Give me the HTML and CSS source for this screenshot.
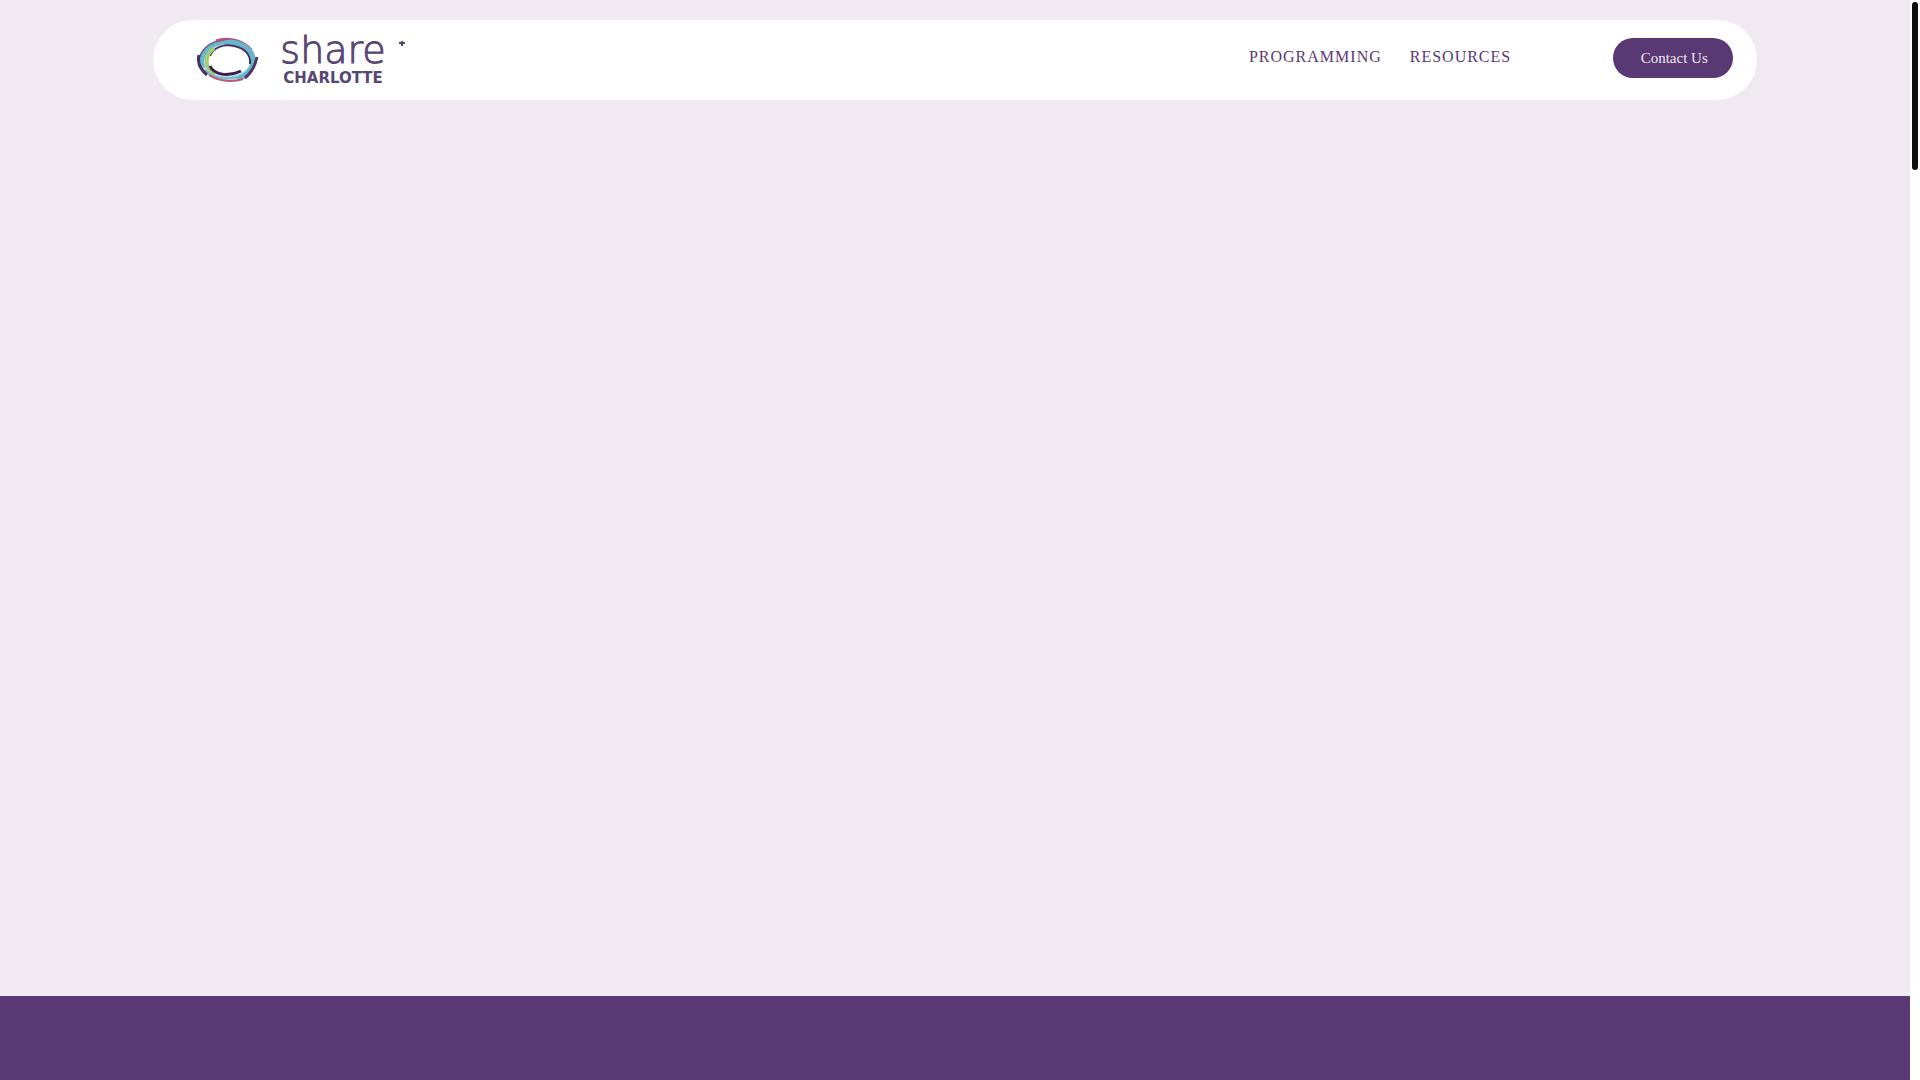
FILE: index.html
```html
<!DOCTYPE html>
<html lang="en">
<head>
<meta charset="utf-8">
<meta name="viewport" content="width=device-width, initial-scale=1">
<title>SHARE Charlotte</title>
<link rel="stylesheet" href="styles.css">
</head>
<body>
<div class="page">
  <div class="hero">
    <header class="header">
      <a class="logo" href="#" aria-label="SHARE Charlotte home">
        <svg class="ring" viewBox="0 0 62 46" fill="none" aria-hidden="true">
          <ellipse cx="31" cy="23" rx="25" ry="18" stroke="#b9dce3" stroke-width="5"/>
          <path d="M3 31C-1 15 12 4 29 3" stroke="#6d5486" stroke-width="2"/>
          <path d="M6 31C1 17 13 7 30 4" stroke="#62bacb" stroke-width="4"/>
          <path d="M19 4C33-1 48 5 54 13" stroke="#b34e74" stroke-width="3"/>
          <path d="M27 6C43 3 57 12 56 25C55 34 48 40 40 42" stroke="#64b7cb" stroke-width="5"/>
          <path d="M13 19C16 10 27 7 37 9C48 11 54 18 53 27" stroke="#49305f" stroke-width="2"/>
          <path d="M17 11C7 18 7 31 18 37" stroke="#a5ca70" stroke-width="4"/>
          <path d="M13 29C17 38 31 40 44 34" stroke="#38214f" stroke-width="3"/>
          <path d="M8 33C15 41 27 43 41 40" stroke="#74b8ca" stroke-width="2"/>
          <path d="M12 38C22 45 37 45 46 42" stroke="#bd5878" stroke-width="2"/>
          <path d="M60 20C58 30 54 36 48 41" stroke="#4f3867" stroke-width="3"/>
          <path d="M2 18C0 26 4 33 10 38" stroke="#49305f" stroke-width="3"/>
        </svg>
        <svg class="wordmark" viewBox="0 0 148 50" aria-hidden="true">
          <text class="wordmark-share" x="70" y="28">share</text>
          <text class="wordmark-city" x="70" y="48">CHARLOTTE</text>
          <path d="M139 6v5M136 8h6" stroke="#584673" stroke-width="2"/>
        </svg>
      </a>
      <nav class="nav" aria-label="Main">
        <a class="nav-link" href="#">PROGRAMMING</a>
        <a class="nav-link" href="#">RESOURCES</a>
      </nav>
      <button class="contact" type="button">Contact Us</button>
    </header>
  </div>
  <section class="band"></section>
</div>
<div class="scroll-track" aria-hidden="true"><div class="scroll-thumb"></div></div>
</body>
</html>
```
FILE: styles.css
```css
* {
  box-sizing: border-box;
}

body {
  display: flex;
  min-height: 100vh;
  margin: 0;
  background: #fff;
  font-family: "Liberation Serif", "Times New Roman", serif;
}

.page {
  display: flex;
  flex: 1;
  flex-direction: column;
}

.hero {
  flex: 1;
  padding: 20px 8%;
  background: #f0e9f1;
}

.header {
  display: flex;
  align-items: center;
  height: 80px;
  padding: 0 24px 0 44px;
  border-radius: 40px;
  background: #fff;
}

.logo {
  display: flex;
  align-items: center;
  gap: 4px;
  margin-right: auto;
}

.ring {
  width: 62px;
  height: 46px;
}

.wordmark {
  width: 148px;
  height: 50px;
  overflow: visible;
}

.wordmark text {
  fill: #584673;
  font-family: "DejaVu Sans", sans-serif;
  text-anchor: middle;
}

.wordmark .wordmark-share {
  font-size: 38px;
  font-weight: 200;
  stroke: #584673;
  stroke-width: 1px;
}

.wordmark .wordmark-city {
  font-size: 15px;
  font-weight: 700;
}

.nav {
  display: flex;
  gap: 28px;
  margin-right: 102px;
  padding-bottom: 6px;
}

.nav-link {
  color: #593873;
  font-size: 16px;
  line-height: 20px;
  letter-spacing: 1px;
  text-decoration: none;
}

.contact {
  width: 120px;
  height: 40px;
  margin-bottom: 4px;
  padding: 0 0 0 2px;
  border: 0;
  border-radius: 20px;
  background: #593873;
  color: #f0e9f1;
  font-family: inherit;
  font-size: 15px;
}

.band {
  height: 84px;
  background: #593873;
}

.scroll-track {
  width: 10px;
  padding: 2px;
}

.scroll-thumb {
  width: 6px;
  height: 168px;
  border-radius: 3px;
  background: #0e0e0e;
}
```
